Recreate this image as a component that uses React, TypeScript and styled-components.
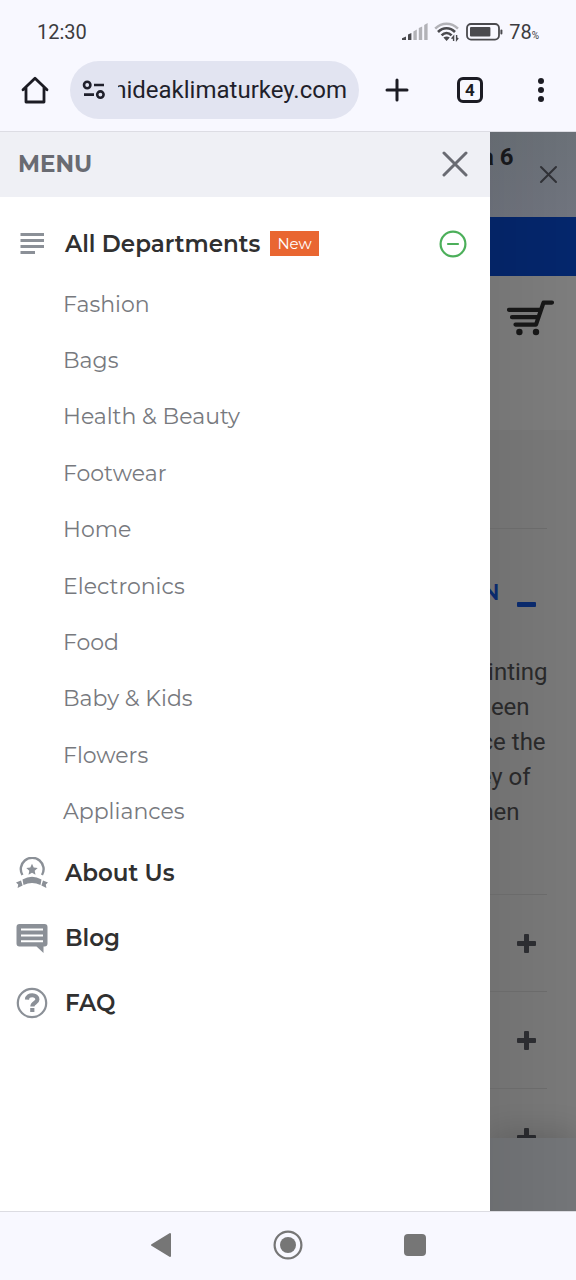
import React from "react";
import styled, { createGlobalStyle } from "styled-components";

const GlobalStyle = createGlobalStyle`
  *, *::before, *::after { box-sizing: border-box; }
  body { margin: 0; background: #f8f8ff; }
  button { border: 0; padding: 0; background: none; font: inherit; color: inherit; cursor: pointer; }
  a { color: inherit; text-decoration: none; }
  ul, p, h1, h2 { margin: 0; padding: 0; list-style: none; }
  svg { display: block; flex: none; }
`;

const system = `Roboto, "Liberation Sans", sans-serif`;
const brand = `Montserrat, Inter, "Liberation Sans", sans-serif`;
const sideShade = `linear-gradient(90deg, rgba(0, 0, 0, 0.06), rgba(0, 0, 0, 0))`;

const Screen = styled.div`
  display: flex;
  flex-direction: column;
  height: 100vh;
  font-family: ${system};
`;

const StatusBar = styled.header`
  display: flex;
  align-items: center;
  justify-content: space-between;
  height: 60px;
  padding: 4px 37px 0;
  font-size: 20px;
  font-weight: 400;
  color: #3c3c40;
`;

const StatusIcons = styled.div`
  display: flex;
  align-items: center;
  gap: 6px;
`;

const Battery = styled.span`
  display: flex;
  align-items: baseline;
  small { font-size: 10px; }
`;

const Toolbar = styled.div`
  display: flex;
  padding: 1px 0 12px;
  border-bottom: 1px solid #dddde4;
  color: #1c1c24;
`;

const ToolButton = styled.button<{ $width: number }>`
  display: flex;
  align-items: center;
  justify-content: center;
  width: ${(p) => p.$width}px;
`;

const AddressPill = styled.label`
  display: flex;
  flex: 1;
  align-items: center;
  gap: 12px;
  min-width: 0;
  height: 58px;
  padding: 0 12px;
  border-radius: 29px;
  background: #e2e4f1;
`;

const Address = styled.input`
  flex: 1;
  min-width: 0;
  padding: 0;
  border: 0;
  outline: 0;
  background: none;
  direction: rtl;
  font: 400 24px ${system};
  color: #1f1f2b;
`;

const TabCount = styled.span`
  display: flex;
  align-items: center;
  justify-content: center;
  width: 26px;
  height: 26px;
  border: 3px solid #1c1c24;
  border-radius: 6px;
  font-size: 17px;
  font-weight: 700;
`;

const Viewport = styled.main`
  display: flex;
  flex: 1;
  min-height: 0;
  overflow: hidden;
`;

const Drawer = styled.nav`
  width: 85%;
  overflow: hidden;
  background: #fff;
  font-family: ${brand};
`;

const DrawerHeader = styled.div`
  display: flex;
  align-items: center;
  justify-content: space-between;
  height: 65px;
  padding: 0 22px 2px 18px;
  background: #eff0f5;
  color: #696b72;
  h1 { font-size: 23px; font-weight: 700; }
`;

const Menu = styled.ul`
  padding-top: 14px;
`;

const MenuRow = styled.div`
  display: flex;
  align-items: center;
  height: 65px;
  padding: 0 23px 0 16px;
`;

const MenuLink = styled.a`
  display: flex;
  align-items: center;
  gap: 17px;
  font-size: 23px;
  font-weight: 600;
  color: #303030;
`;

const Tag = styled.span`
  margin-left: 10px;
  padding: 0 7px;
  background: #e96631;
  font-size: 15px;
  line-height: 25px;
  color: #fff;
`;

const Collapse = styled.button`
  margin-left: auto;
  color: #4caf5a;
`;

const SubMenu = styled.ul`
  display: grid;
  grid-auto-rows: 1fr;
  align-items: center;
  height: 564px;
  padding-left: 63px;
  font-size: 22px;
  color: #77797e;
`;

const Page = styled.div`
  display: flex;
  flex: 1;
  flex-direction: column;
  min-width: 0;
  overflow: hidden;
`;

const Notice = styled.div`
  display: flex;
  justify-content: space-between;
  height: 85px;
  padding-right: 18px;
  background: ${sideShade}, linear-gradient(#6b7178, #70747e);
  color: #303136;
`;

const NoticeText = styled.p`
  display: flex;
  justify-content: flex-end;
  width: 24px;
  padding-top: 10px;
  overflow: hidden;
  font-size: 24px;
  font-weight: 700;
  line-height: 30px;
  white-space: nowrap;
  color: #17181b;
`;

const BlueBand = styled.div`
  height: 59px;
  background: ${sideShade}, #04266c;
`;

const ShopHeader = styled.div`
  height: 154px;
  padding: 24px 0 0 17px;
  background: ${sideShade}, #7d7d7d;
  color: #171717;
`;

const Faq = styled.section`
  flex: 1;
  min-height: 0;
  padding: 98px 29px 0 0;
  overflow: hidden;
  background: ${sideShade}, #797979;
`;

const FaqItem = styled.div`
  border-top: 1px solid #6b6b6b;
`;

const FaqHead = styled.div<{ $open?: boolean }>`
  display: flex;
  align-items: center;
  justify-content: space-between;
  height: ${(p) => (p.$open ? 126 : 96)}px;
  padding-right: 11px;
  color: ${(p) => (p.$open ? "#0a2a6c" : "#2c2d31")};
  button { margin-left: auto; }
`;

const Clip = styled.span<{ $width: number }>`
  display: flex;
  justify-content: flex-end;
  width: ${(p) => p.$width}px;
  overflow: hidden;
  white-space: nowrap;
`;

const FaqTitle = styled.h2`
  font: 600 22px ${brand};
`;

const FaqText = styled.div`
  padding-bottom: 64px;
  font-size: 24px;
  line-height: 35px;
  color: #29292a;
`;

const BottomBar = styled.div`
  position: relative;
  height: 73px;
  background: ${sideShade}, #737578;
  box-shadow: 0 -6px 30px rgba(0, 0, 0, 0.16);
`;

const SystemNav = styled.footer`
  display: flex;
  justify-content: center;
  height: 69px;
  padding-bottom: 2px;
  border-top: 1px solid #dcdce2;
  color: #767676;
`;

const departments = [
  "Fashion", "Bags", "Health & Beauty", "Footwear", "Home",
  "Electronics", "Food", "Baby & Kids", "Flowers", "Appliances",
];

const excerpt = [
  { text: "inting", width: 58 },
  { text: "een", width: 40 },
  { text: "ce the", width: 56 },
  { text: "ey of", width: 41 },
  { text: "hen", width: 30 },
];

const Cross = ({ size, stroke }: { size: number; stroke: number }) => (
  <svg width={size} height={size} viewBox={`0 0 ${size} ${size}`} stroke="currentColor" strokeWidth={stroke} strokeLinecap="round">
    <path d={`M2 2L${size - 2} ${size - 2}M${size - 2} 2L2 ${size - 2}`} />
  </svg>
);

const SignalIcon = () => (
  <svg width="26" height="18" viewBox="0 0 26 18">
    <g fill="#4a4a4e">
      <path d="M0 15.2L4 13.4V17H0z" />
      <path d="M6 11.6L9.4 10V17H6z" />
    </g>
    <g fill="#b2b2b7">
      <path d="M11.4 8.4L14.8 6.6V17h-3.4z" />
      <path d="M16.8 5L20.2 3.4V17h-3.4z" />
      <path d="M22.2 2L25.6 0V17h-3.4z" />
    </g>
  </svg>
);

const WifiIcon = () => (
  <svg width="26" height="20" viewBox="0 0 26 20" fill="none" strokeWidth="2.6">
    <path d="M1.2 6.600C8 .2 17 .2 24 6.600" stroke="#b2b2b7" />
    <path d="M4 10C9 5 16 5 21 10M7.600 13.400c3-3 7-3 10 0" stroke="#4a4a4e" />
    <path d="M9.400 15.600q3.200-2.400 6.400 0L12.600 19z" fill="#4a4a4e" />
    <path d="M19.600 19v-4.600l-2 2.400M22.600 13v5l1.600-2" stroke="#4a4a4e" strokeWidth="1.4" />
  </svg>
);

const BatteryIcon = () => (
  <svg width="37" height="18" viewBox="0 0 37 18">
    <rect x="1" y="1" width="32" height="15.6" rx="4" fill="none" stroke="#4a4a4e" strokeWidth="1.8" />
    <rect x="4" y="4" width="20.4" height="9.6" rx="1" fill="#4a4a4e" />
    <rect x="34.4" y="6.4" width="2" height="5" rx="1" fill="#4a4a4e" />
  </svg>
);

const HomeIcon = () => (
  <svg width="28" height="28" viewBox="0 0 28 28" fill="none" stroke="currentColor" strokeWidth="2.8" strokeLinejoin="round" strokeLinecap="round">
    <path d="M2 13.8L14 2.2L26 13.8M5 11.4V26H23V11.4" />
  </svg>
);

const TuneIcon = () => (
  <svg width="24" height="20" viewBox="0 0 24 20" fill="none" stroke="#1f1f2b" strokeWidth="2.6">
    <circle cx="5.2" cy="5" r="3.2" />
    <path d="M12 5h10M2 14.600h10" />
    <circle cx="18.4" cy="14.6" r="3.2" />
  </svg>
);

const CartIcon = () => (
  <svg width="48" height="36" viewBox="0 0 48 36" fill="none" stroke="currentColor" strokeWidth="4.2" strokeLinecap="round" strokeLinejoin="round">
    <path d="M45 2.600H36.500L29 24.600H8.500M2 9.800H33M5 17.200H30" />
    <circle cx="12.4" cy="32" r="3.2" fill="currentColor" stroke="none" />
    <circle cx="29" cy="32" r="3.2" fill="currentColor" stroke="none" />
  </svg>
);

const LinesIcon = () => (
  <svg width="32" height="32" viewBox="0 0 32 32" stroke="#8b9097" strokeWidth="3">
    <path d="M4.500 6.500H28M4.500 12.500H28M4.500 18.500H28M4.500 24.500H19" />
  </svg>
);

const AwardIcon = () => (
  <svg width="32" height="32" viewBox="0 0 32 32" fill="#8b9097">
    <path d="M6.400 18A11.400 11.400 0 1 1 26 18" fill="none" stroke="#8b9097" strokeWidth="2.4" />
    <path d="M16 6.800l1.700 3.700 4 .5-3 2.700.8 4-3.500-2-3.500 2 .8-4-3-2.700 4-.5z" />
    <path d="M6.500 22.500q9.500-5.500 19 0l-1 5.500q-8.500-4-17 0z" />
    <path d="M5 23.500L0 25.500 2.200 27.500 1.600 31l5-2.500zM27 23.500l5 2-2.200 2 .6 3.500-5-2.500z" />
  </svg>
);

const BlogIcon = () => (
  <svg width="32" height="32" viewBox="0 0 32 32">
    <path d="M3.500 2h25q3 0 3 3v16.500q0 3-3 3H27.500V31l-7-6.500h-17q-3 0-3-3V5q0-3 3-3z" fill="#8b9097" />
    <path d="M5 7.400H27M5 13.400H27M5 19.200H27" stroke="#fff" strokeWidth="2" />
  </svg>
);

const HelpIcon = () => (
  <svg width="32" height="32" viewBox="0 0 32 32" fill="none" stroke="#8b9097">
    <circle cx="16" cy="16" r="14.2" strokeWidth="2.2" />
    <path d="M11 12.600c.2-6 10.600-5.600 10.400 0 0 3.200-5 3.200-5 6.800" strokeWidth="4.2" />
    <path d="M14.200 23h4.200" strokeWidth="4" />
  </svg>
);

const MinusCircle = () => (
  <svg width="28" height="28" viewBox="0 0 28 28" fill="none" stroke="currentColor" strokeWidth="2.2" strokeLinecap="round">
    <circle cx="14" cy="14" r="12.4" />
    <path d="M9 14h10" />
  </svg>
);

const PlusIcon = () => (
  <svg width="19" height="19" viewBox="0 0 19 19" fill="currentColor">
    <rect y="7" width="19" height="5" rx="1" />
    <rect x="7" width="5" height="19" rx="1" />
  </svg>
);

const MinusIcon = () => (
  <svg width="19" height="29" viewBox="0 0 19 29" fill="currentColor">
    <rect y="24" width="19" height="5" rx="1" />
  </svg>
);

const links = [
  { label: "About Us", Icon: AwardIcon },
  { label: "Blog", Icon: BlogIcon },
  { label: "FAQ", Icon: HelpIcon },
];

export default function App() {
  return (
    <Screen>
      <GlobalStyle />
      <StatusBar>
        <span>12:30</span>
        <StatusIcons>
          <SignalIcon />
          <WifiIcon />
          <BatteryIcon />
          <Battery>78<small>%</small></Battery>
        </StatusIcons>
      </StatusBar>
      <Toolbar>
        <ToolButton $width={70} aria-label="Home"><HomeIcon /></ToolButton>
        <AddressPill>
          <TuneIcon />
          <Address aria-label="Address" readOnly value="mideaklimaturkey.com" />
        </AddressPill>
        <ToolButton $width={76} aria-label="New tab">
          <svg width="24" height="24" viewBox="0 0 24 24" stroke="currentColor" strokeWidth="3" strokeLinecap="round">
            <path d="M12 2V22M2 12H22" />
          </svg>
        </ToolButton>
        <ToolButton $width={70} aria-label="Tabs"><TabCount>4</TabCount></ToolButton>
        <ToolButton $width={71} aria-label="More">
          <svg width="6" height="24" viewBox="0 0 6 24" fill="currentColor">
            <circle cx="3" cy="3" r="3" />
            <circle cx="3" cy="12" r="3" />
            <circle cx="3" cy="21" r="3" />
          </svg>
        </ToolButton>
      </Toolbar>
      <Viewport>
        <Drawer>
          <DrawerHeader>
            <h1>MENU</h1>
            <button aria-label="Close menu"><Cross size={26} stroke={3} /></button>
          </DrawerHeader>
          <Menu>
            <li>
              <MenuRow>
                <MenuLink href="#"><LinesIcon />All Departments</MenuLink>
                <Tag>New</Tag>
                <Collapse aria-label="Collapse"><MinusCircle /></Collapse>
              </MenuRow>
              <SubMenu>
                {departments.map((name) => (
                  <li key={name}><a href="#">{name}</a></li>
                ))}
              </SubMenu>
            </li>
            {links.map(({ label, Icon }) => (
              <li key={label}>
                <MenuRow>
                  <MenuLink href="#"><Icon />{label}</MenuLink>
                </MenuRow>
              </li>
            ))}
          </Menu>
        </Drawer>
        <Page>
          <Notice>
            <NoticeText>a 6</NoticeText>
            <button aria-label="Dismiss"><Cross size={19} stroke={2} /></button>
          </Notice>
          <BlueBand />
          <ShopHeader>
            <button aria-label="Cart"><CartIcon /></button>
          </ShopHeader>
          <Faq>
            <FaqItem>
              <FaqHead $open>
                <FaqTitle><Clip $width={10}>N</Clip></FaqTitle>
                <button aria-label="Collapse answer"><MinusIcon /></button>
              </FaqHead>
              <FaqText>
                {excerpt.map((line) => (
                  <Clip key={line.text} $width={line.width}>{line.text}</Clip>
                ))}
              </FaqText>
            </FaqItem>
            {[1, 2, 3].map((n) => (
              <FaqItem key={n}>
                <FaqHead>
                  <button aria-label="Expand answer"><PlusIcon /></button>
                </FaqHead>
              </FaqItem>
            ))}
          </Faq>
          <BottomBar />
        </Page>
      </Viewport>
      <SystemNav>
        <ToolButton $width={127} aria-label="Back">
          <svg width="22" height="26" viewBox="0 0 22 26" fill="currentColor" stroke="currentColor" strokeWidth="2" strokeLinejoin="round">
            <path d="M2 13L20 2V24z" />
          </svg>
        </ToolButton>
        <ToolButton $width={127} aria-label="Home screen">
          <svg width="30" height="30" viewBox="0 0 30 30">
            <circle cx="15" cy="15" r="13.4" fill="none" stroke="currentColor" strokeWidth="2.2" />
            <circle cx="15" cy="15" r="8" fill="currentColor" />
          </svg>
        </ToolButton>
        <ToolButton $width={127} aria-label="Recent apps">
          <svg width="22" height="22" viewBox="0 0 22 22" fill="currentColor">
            <rect width="22" height="22" rx="4" />
          </svg>
        </ToolButton>
      </SystemNav>
    </Screen>
  );
}
